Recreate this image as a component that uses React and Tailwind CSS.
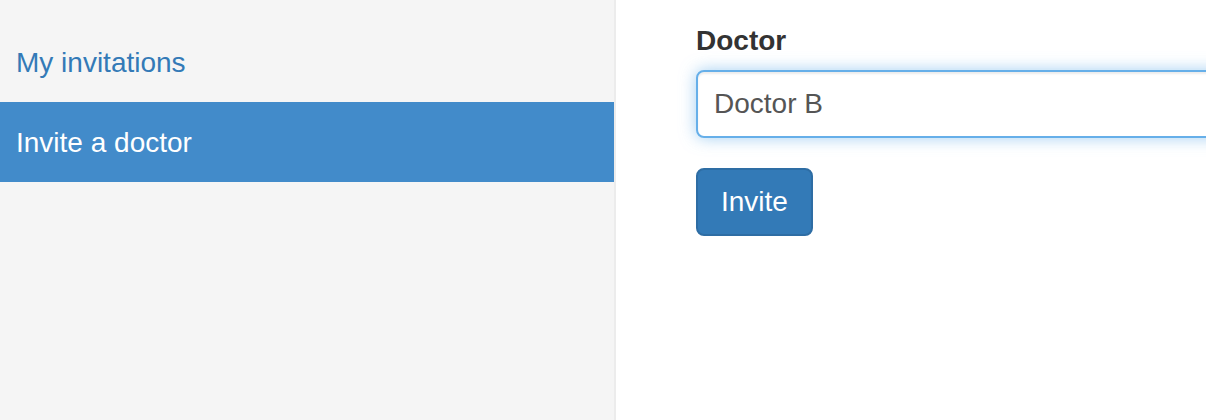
import React from 'react';

function Sidebar() {
  return (
    <div className="w-[616px] shrink-0 bg-[#f5f5f5] border-r-2 border-[#ececec] pt-[22px] min-h-[420px]">
      <a className="block h-[80px] leading-[82px] pl-4 text-[28px] text-[#337ab7]">My invitations</a>
      <a className="block h-[80px] leading-[82px] pl-4 text-[28px] text-white bg-[#428bca]">Invite a doctor</a>
    </div>
  );
}

export default function App() {
  return (
    <div className="flex w-[1206px] h-[420px] overflow-hidden bg-white font-['Liberation_Sans',Arial,sans-serif]">
      <Sidebar />
      <div className="flex-1 pl-[80px] pt-[20px]">
        <label className="block text-[28px] leading-[42px] font-bold text-[#333] mb-[8px]">Doctor</label>
        <div className="w-[640px] h-[68px] flex items-center px-[16px] text-[28px] text-[#555] bg-white border-2 border-[#66afe9] rounded-[8px] shadow-[inset_0_2px_2px_rgba(0,0,0,0.075),0_0_16px_rgba(102,175,233,0.6)]">
          Doctor B
        </div>
        <button className="mt-[30px] h-[68px] px-[23px] text-[28px] text-white bg-[#337ab7] border-2 border-[#2e6da4] rounded-[8px]">
          Invite
        </button>
      </div>
    </div>
  );
}
